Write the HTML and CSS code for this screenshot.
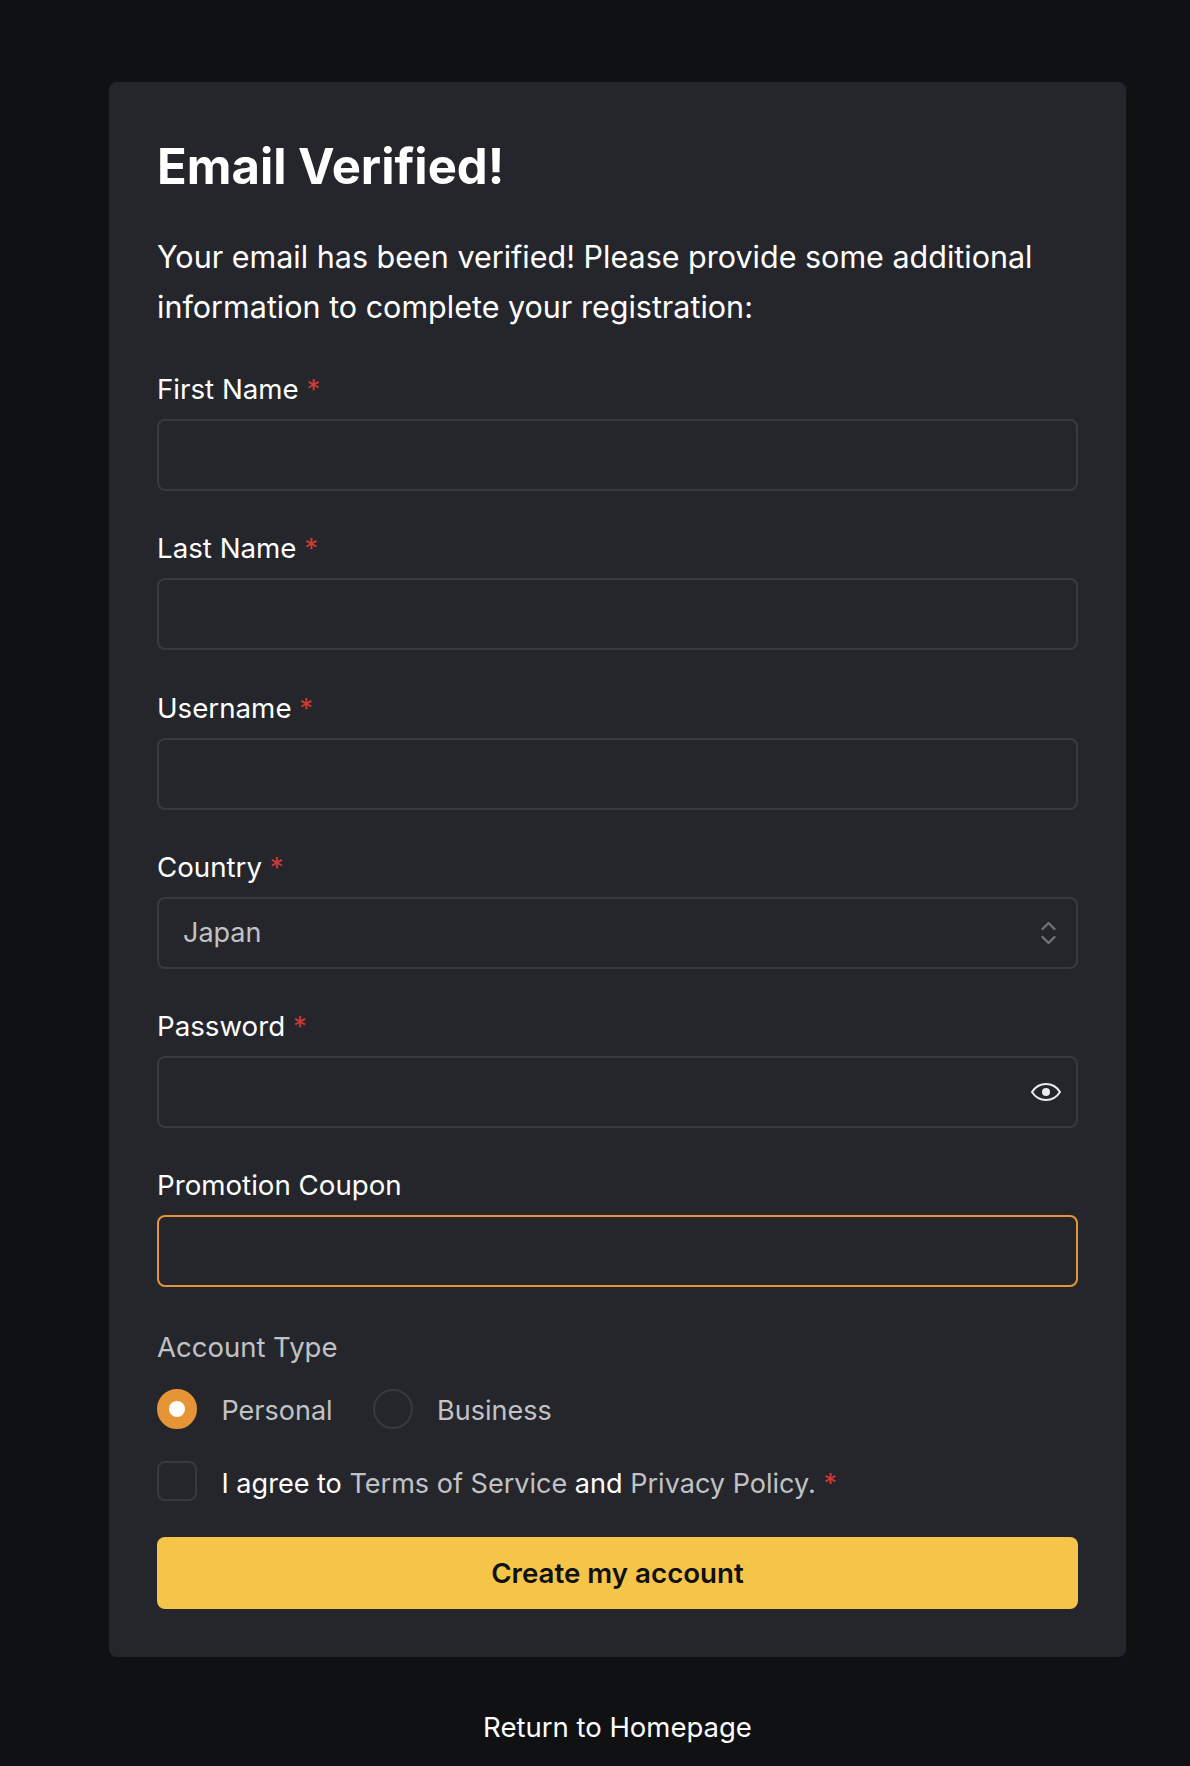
FILE: index.html
```html
<!DOCTYPE html>
<html lang="en">
<head>
<meta charset="utf-8">
<title>Email Verified</title>
<link rel="stylesheet" href="styles.css">
</head>
<body>
<main class="page">
  <form class="card">
    <h1 class="title">Email Verified!</h1>
    <p class="intro">Your email has been verified! Please provide some additional information to complete your registration:</p>
    <div class="field">
      <label class="label">First Name <span class="req">*</span></label>
      <input class="input" type="text">
    </div>
    <div class="field">
      <label class="label">Last Name <span class="req">*</span></label>
      <input class="input" type="text">
    </div>
    <div class="field">
      <label class="label">Username <span class="req">*</span></label>
      <input class="input" type="text">
    </div>
    <div class="field">
      <label class="label">Country <span class="req">*</span></label>
      <div class="input select">
        <span class="select-value">Japan</span>
        <svg class="chevrons" viewBox="0 0 15 24" width="15" height="24" fill="none" stroke="#6f7177" stroke-width="2.4" stroke-linecap="round" stroke-linejoin="round"><path d="M1.5 8 7.5 2 13.5 8"/><path d="M1.5 16 7.5 22 13.500 16"/></svg>
      </div>
    </div>
    <div class="field">
      <label class="label">Password <span class="req">*</span></label>
      <div class="input password">
        <svg class="eye" viewBox="0 0 30 18" width="30" height="18" fill="none"><path d="M1 9C4.500 3.500 9.300 1 15 1S25.500 3.500 29 9C25.500 14.500 20.700 17 15 17S4.500 14.500 1 9Z" stroke="#e9ecef" stroke-width="2" stroke-linejoin="round"/><circle cx="15" cy="9" r="4" fill="#e9ecef"/></svg>
      </div>
    </div>
    <div class="field">
      <label class="label">Promotion Coupon</label>
      <input class="input focus" type="text">
    </div>
    <div class="account">
      <div class="account-label">Account Type</div>
      <div class="radios">
        <label class="radio"><span class="dot dot-on"></span><span class="radio-text">Personal</span></label>
        <label class="radio"><span class="dot"></span><span class="radio-text">Business</span></label>
      </div>
    </div>
    <label class="agree">
      <span class="check"></span>
      <span class="agree-text">I agree to <a class="link" href="#">Terms of Service</a> and <a class="link" href="#">Privacy Policy.</a> <span class="req">*</span></span>
    </label>
    <button class="submit" type="button">Create my account</button>
  </form>
  <a class="home" href="#">Return to Homepage</a>
</main>
</body>
</html>
```
FILE: styles.css
```css
* { box-sizing: border-box; }
html, body { margin: 0; padding: 0; }
body {
  background: #101113;
  color: #fff;
  font-family: Inter, "Liberation Sans", sans-serif;
  font-size: 27px;
  height: 1766px;
  overflow: hidden;
}
.page {
  width: 1235px;
  display: flex;
  flex-direction: column;
  align-items: center;
  padding-top: 82px;
}
.card {
  width: 1017px;
  height: 1575px;
  background: #25262b;
  border-radius: 8px;
  padding: 48px;
  display: flex;
  flex-direction: column;
}
.title {
  margin: 0;
  font-size: 49px;
  line-height: 70px;
  font-weight: 700;
  position: relative;
  top: 2px;
}
.intro {
  margin: 32px 0 0;
  font-size: 30.5px;
  line-height: 50px;
  font-weight: 400;
}
.field { margin-top: 35px; }
.field + .field { margin-top: 35.25px; }
.label {
  display: block;
  font-size: 27.7px;
  font-weight: 400;
  line-height: 44px;
  margin-bottom: 8px;
}
.req { color: #d03a34; }
.input {
  display: block;
  width: 100%;
  height: 72px;
  background: #25262b;
  border: 2px solid #373a40;
  border-radius: 8px;
  outline: none;
}
.select {
  display: flex;
  align-items: center;
  justify-content: space-between;
  padding: 0 20px 0 24px;
}
.select-value { color: #c1c2c5; font-size: 27px; }
.password {
  display: flex;
  align-items: center;
  justify-content: flex-end;
  padding-right: 15px;
}
.focus { border-color: #e59436; }
.account { margin-top: 37.75px; }
.account-label {
  color: #c1c2c5;
  font-size: 27.5px;
  font-weight: 400;
  line-height: 44px;
}
.radios { display: flex; gap: 40px; margin-top: 20px; }
.radio {
  display: flex;
  align-items: center;
  gap: 24.5px;
  color: #c1c2c5;
  font-size: 27px;
}
.radio-text { padding-top: 2px; }
.dot {
  width: 40px;
  height: 40px;
  border-radius: 50%;
  border: 2px solid #373a40;
  flex: none;
  display: flex;
  align-items: center;
  justify-content: center;
}
.dot-on { background: #e59436; border-color: #e59436; }
.dot-on::after {
  content: "";
  width: 16px;
  height: 16px;
  border-radius: 50%;
  background: #fff;
}
.agree {
  display: flex;
  align-items: center;
  gap: 24.5px;
  margin-top: 32px;
  font-size: 27.05px;
}
.agree-text { padding-top: 4px; }
.check {
  width: 40px;
  height: 40px;
  border: 2px solid #373a40;
  border-radius: 8px;
  flex: none;
}
.link { color: #c1c2c5; text-decoration: none; }
.submit {
  margin-top: 36px;
  height: 72px;
  width: 100%;
  border: 0;
  border-radius: 8px;
  background: #f5c54a;
  color: #101113;
  font-family: inherit;
  font-size: 27.7px;
  font-weight: 600;
}
.home {
  margin-top: 50px;
  color: #fff;
  font-size: 27.5px;
  line-height: 40px;
  text-decoration: none;
}
```
